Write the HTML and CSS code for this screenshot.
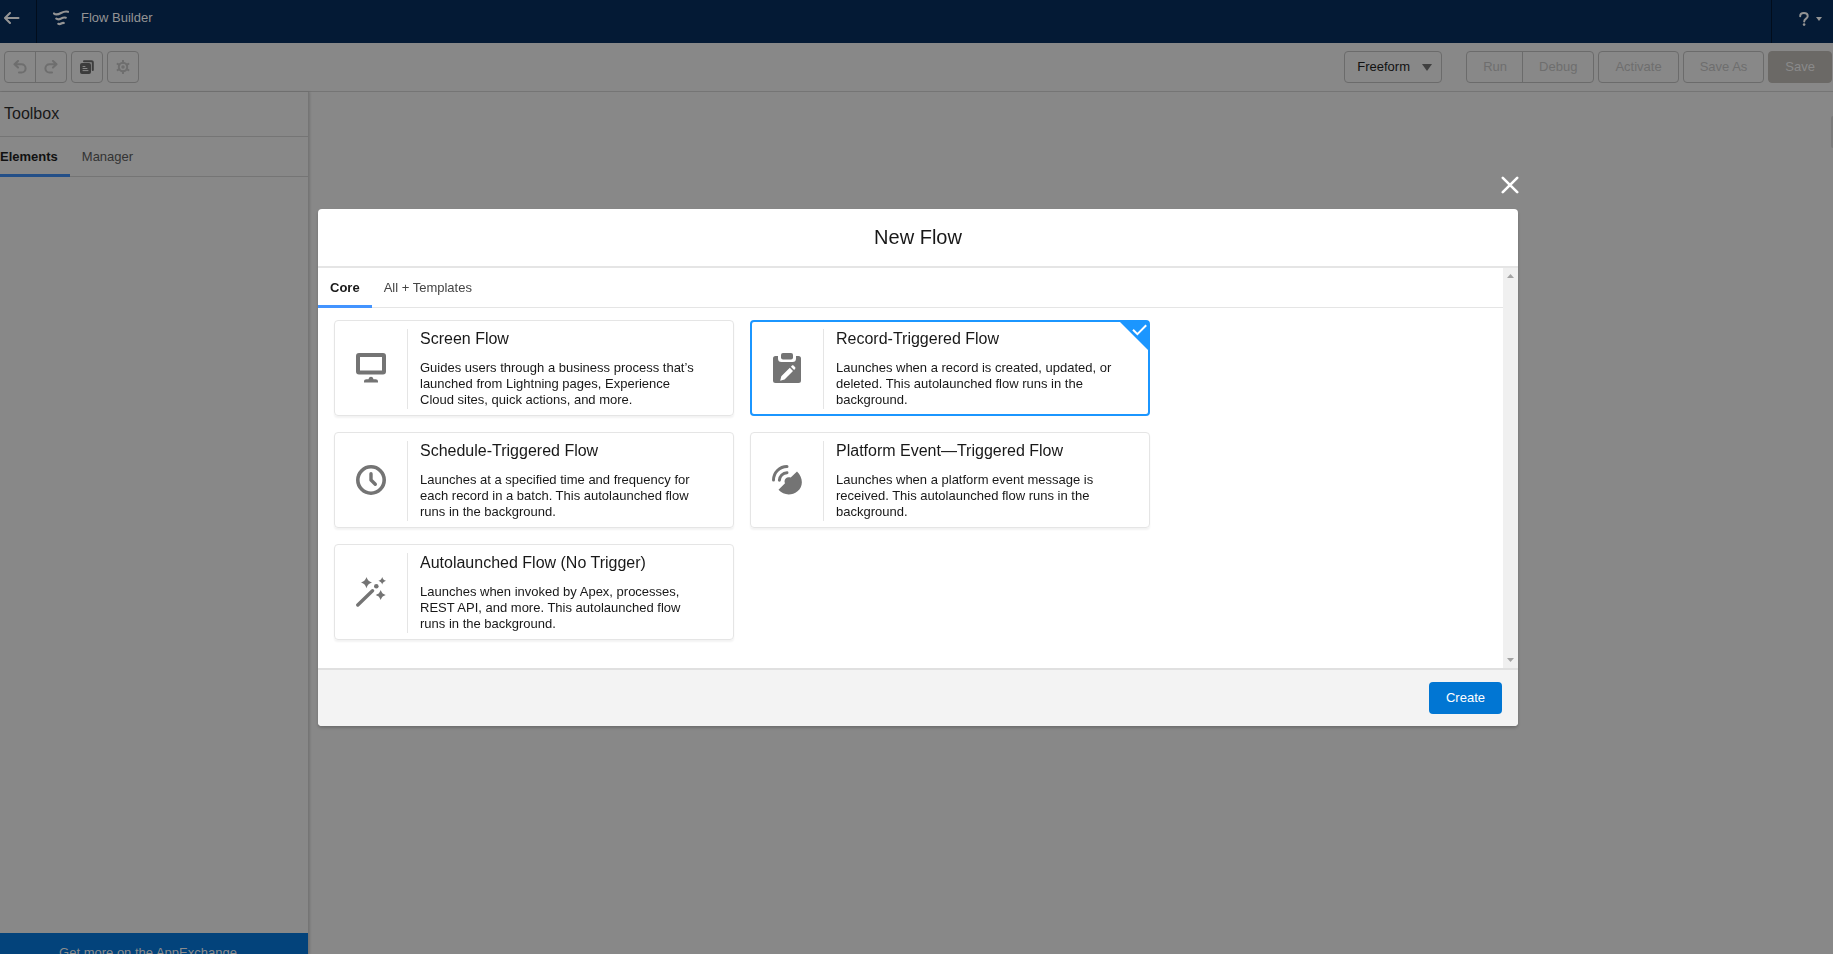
FILE: index.html
```html
<!DOCTYPE html>
<html lang="en">
<head>
<meta charset="utf-8">
<title>Flow Builder</title>
<link rel="stylesheet" href="styles.css">
</head>
<body>
<div class="app">
  <header class="topbar">
    <a class="back" href="#" aria-label="Back">
      <svg width="16" height="12" viewBox="0 0 16 12"><path d="M14.500 6H1.500M6 1 1 6l5 5" fill="none" stroke="currentColor" stroke-width="2" stroke-linecap="round" stroke-linejoin="round"/></svg>
    </a>
    <div class="brand">
      <svg width="16" height="16" viewBox="0 0 16 16" fill="none" stroke="currentColor" stroke-linecap="round"><path d="M1 3.500C3 5.300 5.500 4.300 8 3s4.800-2 7-1.200" stroke-width="2.200"/><path d="M3.300 8.700c1.700 1.100 3.200.6 4.800-.2 1.700-.9 3-1.400 4.700-.8" stroke-width="2.200"/><path d="M5.300 13.800c1.300.7 2 .3 3-.3.900-.5 1.500-.8 2.500-.5" stroke-width="2.200"/></svg>
      <span>Flow Builder</span>
    </div>
    <button class="help" type="button" aria-label="Help">
      <svg width="10" height="14" viewBox="0 0 10 14"><path d="M1.200 4.200C1.200 2 2.800 1.100 4.900 1.100s3.800 1.100 3.800 3.100c0 2.400-3.500 2.400-3.500 5.200" fill="none" stroke="currentColor" stroke-width="2" stroke-linecap="round"/><circle cx="5.100" cy="12.600" r="1.300" fill="currentColor"/></svg>
      <svg width="6" height="4" viewBox="0 0 6 4"><path d="M0 0h6L3 4z" fill="currentColor"/></svg>
    </button>
  </header>

  <div class="toolbar">
    <div class="group">
      <button class="btn icon" type="button" disabled aria-label="Undo"><svg width="14" height="14" viewBox="0 0 14 14"><path d="M5 1 1.500 4.300 5 7.600M2 4.300h6.500a4 4 0 0 1 0 8.200H6" /></svg></button>
      <button class="btn icon" type="button" disabled aria-label="Redo"><svg width="14" height="14" viewBox="0 0 14 14"><path d="m9 1 3.500 3.300L9 7.600M12 4.300H5.500a4 4 0 0 0 0 8.200H8" /></svg></button>
    </div>
    <button class="btn icon dark" type="button" aria-label="Copy"><svg width="14" height="14" viewBox="0 0 14 14"><path d="M4 1.200h7.600a1.200 1.200 0 0 1 1.200 1.200V10"/><rect x="1" y="4" width="9" height="9" rx="1" fill="currentColor"/><path class="fine" d="M3 6.500h2M3 8.500h4M3 10.600h5"/></svg></button>
    <button class="btn icon" type="button" disabled aria-label="Settings"><svg width="14" height="14" viewBox="0 0 14 14"><circle cx="7" cy="7" r="4.200"/><circle cx="7" cy="7" r="1.700" fill="currentColor" stroke="none"/><path d="M7 .8v2M7 11.200v2M1.600 3.900l1.700 1M10.700 9.100l1.700 1M1.600 10.100l1.700-1M10.700 4.900l1.700-1"/></svg></button>
    <select class="layout" aria-label="Layout"><option>Freeform</option></select>
    <div class="group actions">
      <button class="btn" type="button" disabled>Run</button>
      <button class="btn" type="button" disabled>Debug</button>
    </div>
    <button class="btn" type="button" disabled>Activate</button>
    <button class="btn" type="button" disabled>Save As</button>
    <button class="btn solid" type="button" disabled>Save</button>
  </div>

  <div class="workspace">
    <aside class="toolbox">
      <h2 class="toolbox-title">Toolbox</h2>
      <div class="tabs toolbox-tabs" role="tablist">
        <button class="tab active" type="button" role="tab" aria-selected="true">Elements</button>
        <button class="tab" type="button" role="tab">Manager</button>
      </div>
      <a class="exchange" href="#">Get more on the AppExchange</a>
    </aside>
    <main class="canvas"><span class="handle"></span></main>
  </div>
</div>

<div class="backdrop">
  <section class="modal" role="dialog" aria-modal="true" aria-labelledby="modal-title">
    <button class="close" type="button" aria-label="Close">
      <svg width="18" height="18" viewBox="0 0 18 18"><path d="m1.800 1.800 14.400 14.400M16.200 1.800 1.800 16.200" fill="none" stroke="currentColor" stroke-width="2.600" stroke-linecap="round"/></svg>
    </button>
    <header class="modal-header"><h1 id="modal-title">New Flow</h1></header>
    <div class="modal-body">
      <div class="content">
        <div class="tabs modal-tabs" role="tablist">
          <button class="tab active" type="button" role="tab" aria-selected="true">Core</button>
          <button class="tab" type="button" role="tab">All + Templates</button>
        </div>
        <div class="cards">
          <label class="card">
            <input type="radio" name="flow">
            <span class="card-icon"><svg width="30" height="30" viewBox="0 0 30 30"><rect x="2" y="2" width="26" height="17.500" rx="1" fill="none" stroke="currentColor" stroke-width="4"/><path d="M8 29.500V28.600c0-1.500 1-2.300 2.400-2.300h2.100c.4-1.900 1.300-2.600 2.500-2.600s2.100.7 2.500 2.600h2.100c1.400 0 2.400.8 2.400 2.300v.9z" fill="currentColor"/></svg></span>
            <span class="card-text"><span class="card-title">Screen Flow</span><span class="card-desc">Guides users through a business process that’s launched from Lightning pages, Experience Cloud sites, quick actions, and more.</span></span>
          </label>
          <label class="card">
            <input type="radio" name="flow" checked>
            <span class="card-icon"><svg width="30" height="30" viewBox="0 0 30 30"><path d="M3.500 3H6v2.500A3.500 3.500 0 0 0 9.500 9h11A3.500 3.500 0 0 0 24 5.500V3h2.500A2.500 2.500 0 0 1 29 5.500v22a2.500 2.500 0 0 1-2.500 2.500h-23A2.500 2.500 0 0 1 1 27.500v-22A2.500 2.500 0 0 1 3.500 3z" fill="currentColor"/><rect x="9" y="0" width="12" height="6.500" rx="2" fill="currentColor"/><path d="m17.800 14.800 3.200 3.200-8.500 8.500-4.300 1.300 1.100-4.500zM18.900 13.700l.9-.9c.6-.6 1.300-.6 1.900 0l1.300 1.300c.6.6.6 1.300 0 1.900l-.9.900z" fill="#fff"/></svg></span>
            <span class="card-text"><span class="card-title">Record-Triggered Flow</span><span class="card-desc">Launches when a record is created, updated, or deleted. This autolaunched flow runs in the background.</span></span>
            <svg class="corner" width="30" height="30" viewBox="0 0 30 30"><path d="M0 0h30v30z" fill="#1b96ff"/><path d="m14 8.800 4.400 4.400L27.200 4.300" fill="none" stroke="#fff" stroke-width="2"/></svg>
          </label>
          <label class="card">
            <input type="radio" name="flow">
            <span class="card-icon"><svg width="30" height="30" viewBox="0 0 30 30" fill="none" stroke="currentColor"><circle cx="15" cy="15" r="13.200" stroke-width="3.600"/><path d="M15 8.800V15l4.300 4.300" stroke-width="3.400" stroke-linecap="round" stroke-linejoin="round"/></svg></span>
            <span class="card-text"><span class="card-title">Schedule-Triggered Flow</span><span class="card-desc">Launches at a specified time and frequency for each record in a batch. This autolaunched flow runs in the background.</span></span>
          </label>
          <label class="card">
            <input type="radio" name="flow">
            <span class="card-icon"><svg width="30" height="30" viewBox="0 0 30 30"><path d="M1.500 15A13.500 13.500 0 0 1 15 1.500M7.400 15.300A7.900 7.900 0 0 1 15 7.700" fill="none" stroke="currentColor" stroke-width="3" stroke-linecap="round"/><path d="M25 6.500C31.500 13 31.300 21.500 25.500 26.200 19.500 31 11.500 30.300 6.500 24.800L13 18.300C11.300 14.500 14.500 11 18.700 12.500z" fill="currentColor"/></svg></span>
            <span class="card-text"><span class="card-title">Platform Event—Triggered Flow</span><span class="card-desc">Launches when a platform event message is received. This autolaunched flow runs in the background.</span></span>
          </label>
          <label class="card">
            <input type="radio" name="flow">
            <span class="card-icon"><svg width="30" height="30" viewBox="0 0 30 30" fill="currentColor"><path d="M1.800 28 16.500 13.800" stroke="currentColor" stroke-width="3.400" stroke-linecap="round"/><circle cx="20.300" cy="9.300" r="2.300"/><path d="M10.500 0c1.300 3.400 2 4.100 5.500 5.600-3.500 1.500-4.200 2.200-5.500 5.600C9.200 7.800 8.500 7.100 5 5.600 8.500 4.100 9.200 3.400 10.500 0zM26.200 0c.8 2.300 1.400 2.900 3.800 3.800-2.400.9-3 1.500-3.800 3.800-.8-2.300-1.400-2.900-3.800-3.800 2.400-.9 3-1.500 3.800-3.800zM24.700 13c1.200 3 1.900 3.700 5 5-3.100 1.300-3.800 2-5 5-1.200-3-1.900-3.700-5-5 3.100-1.300 3.800-2 5-5z"/></svg></span>
            <span class="card-text"><span class="card-title">Autolaunched Flow (No Trigger)</span><span class="card-desc">Launches when invoked by Apex, processes, REST API, and more. This autolaunched flow runs in the background.</span></span>
          </label>
        </div>
      </div>
      <div class="scrollbar" aria-hidden="true">
        <svg width="7" height="4" viewBox="0 0 7 4"><path d="M0 4h7L3.500 0z" fill="currentColor"/></svg>
        <svg width="7" height="4" viewBox="0 0 7 4"><path d="M0 0h7L3.500 4z" fill="currentColor"/></svg>
      </div>
    </div>
    <footer class="modal-footer"><button class="create" type="button">Create</button></footer>
  </section>
</div>
</body>
</html>
```
FILE: styles.css
```css
* { box-sizing: border-box; }
body {
  margin: 0;
  height: 100vh;
  overflow: hidden;
  background: #888;
  color: #181818;
  font: 13px/20px "Liberation Sans", Arial, sans-serif;
}
button, select { font: inherit; color: inherit; margin: 0; padding: 0; border: 0; background: none; }
h1, h2 { margin: 0; font-weight: 400; }
svg { display: block; flex: none; }

.app { height: 100%; display: flex; flex-direction: column; }

/* Top bar */
.topbar { display: flex; height: 43px; background: #041a35; color: #949494; }
.back { width: 37px; padding: 12px 0 0 4px; border-right: 1px solid #020d1c; color: inherit; }
.brand { display: flex; gap: 12px; padding: 8px 0 0 16px; }
.brand svg { margin-top: 2px; }
.help { display: flex; align-items: center; gap: 7px; margin-left: auto; width: 62px; padding: 0 0 5px 27px; border-left: 1px solid #020d1c; }

/* Toolbar */
.toolbar { display: flex; gap: 4px; height: 49px; padding: 8px 1px 8px 4px; border-bottom: 1px solid #757575; }
.group { display: flex; }
.btn { height: 32px; padding: 0 16px; border: 1px solid #6b6b6b; border-radius: 4px; color: #6e6e6e; }
.btn.icon { width: 32px; padding: 0; display: grid; place-items: center; }
.btn.icon svg { fill: none; stroke: currentColor; stroke-width: 2; stroke-linecap: round; stroke-linejoin: round; }
.btn.dark { color: #3c3c3c; }
.btn.dark .fine { stroke: #888; stroke-width: 1; }
.btn.solid { background: #6b6966; border-color: #6b6966; color: #8a8a8a; }
.group .btn:first-child { border-radius: 4px 0 0 4px; }
.group .btn:last-child { border-radius: 0 4px 4px 0; margin-left: -1px; }
.actions .btn:first-child { padding-right: 15px; }
.layout {
  appearance: none;
  width: 98px;
  height: 32px;
  margin: 0 20px 0 auto;
  padding: 0 12px;
  border: 1px solid #6b6b6b;
  border-radius: 4px;
  color: #111;
  background: url("data:image/svg+xml,%3Csvg xmlns='http://www.w3.org/2000/svg' width='10' height='7'%3E%3Cpath d='M0 0h10L5 7z' fill='%23404040'/%3E%3C/svg%3E") no-repeat right 9px center;
}

/* Workspace */
.workspace { flex: 1; min-height: 0; display: flex; }
.toolbox { width: 309px; display: flex; flex-direction: column; border-right: 1px solid #757575; box-shadow: 1px 0 2px rgba(0, 0, 0, .15); }
.toolbox-title { padding: 10px 4px; height: 45px; font-size: 16px; line-height: 24px; border-bottom: 1px solid #757575; }
.canvas { flex: 1; display: flex; justify-content: flex-end; padding-top: 24px; }
.handle { width: 2px; height: 32px; background: #7a7a7a; border-radius: 4px 0 0 4px; }
.exchange { margin: auto 0 -21px; height: 42px; flex: none; padding: 10px 12px 0 0; background: #03437b; color: #8c8c8c; text-align: center; text-decoration: none; }

/* Tabs */
.tabs { display: flex; height: 40px; border-bottom: 1px solid #e5e5e5; }
.tab { height: 40px; padding: 2px 12px 0; border-bottom: 3px solid transparent; color: #444; }
.tab.active { font-weight: 700; border-bottom-color: #4394ff; color: #181818; }
.toolbox-tabs { border-color: #757575; }
.toolbox-tabs .tab { color: #333; }
.toolbox-tabs .tab.active { padding-left: 0; color: #111; border-bottom-color: #234f88; }

/* Dialog */
.backdrop { position: fixed; inset: 0; display: flex; align-items: center; justify-content: center; padding: 0 0 19px 3px; }
.modal { position: relative; width: 92%; max-width: 1200px; border-radius: 4px; background: #fff; box-shadow: 0 2px 3px rgba(0, 0, 0, .2); }
.close { position: absolute; right: -1px; top: -33px; color: #fff; }
.modal-header { padding: 16px; border-bottom: 2px solid #e5e5e5; text-align: center; }
.modal-header h1 { font-size: 20px; line-height: 25px; }
.modal-body { display: flex; height: 400px; }
.content { flex: 1; }
.scrollbar { width: 15px; padding: 6px 4px; display: flex; flex-direction: column; justify-content: space-between; background: #f0f0f0; color: #a3a3a3; }
.modal-footer { display: flex; justify-content: flex-end; padding: 12px 16px; border-top: 2px solid #e0e0e0; border-radius: 0 0 4px 4px; background: #f3f3f3; }
.create { height: 32px; padding: 0 17px; border-radius: 4px; background: #0176d3; color: #fff; }

/* Flow type cards */
.cards { display: flex; flex-wrap: wrap; gap: 16px; padding: 12px 16px; }
.card { position: relative; display: flex; width: 400px; height: 96px; padding: 8px 0; border: 1px solid #e5e5e5; border-radius: 4px; box-shadow: 0 2px 2px rgba(0, 0, 0, .05); }
.card:has(input:checked) { padding: 7px 0; border: 2px solid #1b96ff; box-shadow: none; }
.card input { position: absolute; opacity: 0; }
.card-icon { width: 73px; height: 80px; padding-bottom: 2px; display: grid; place-items: center; border-right: 1px solid #e5e5e5; color: #747474; }
.card:has(input:checked) .card-icon { width: 72px; padding-right: 2px; }
.card-text { width: 292px; padding-left: 12px; }
.card-title { display: block; margin-bottom: 11px; font-size: 16px; line-height: 20px; }
.card-desc { display: block; line-height: 16px; }
.corner { position: absolute; top: -1px; right: -1px; }
```
